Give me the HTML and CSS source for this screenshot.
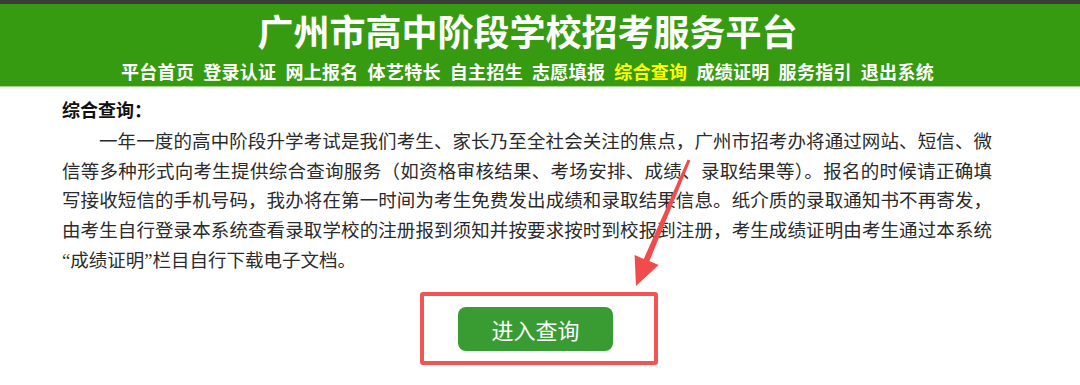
FILE: index.html
```html
<!DOCTYPE html>
<html lang="zh-CN">
<head>
<meta charset="utf-8">
<title>广州市高中阶段学校招考服务平台</title>
<link rel="stylesheet" href="styles.css">
</head>
<body>
<div class="topbar"></div>
<header class="header">
  <h1 class="title">广州市高中阶段学校招考服务平台</h1>
  <nav class="nav">
    <a>平台首页</a>
    <a>登录认证</a>
    <a>网上报名</a>
    <a>体艺特长</a>
    <a>自主招生</a>
    <a>志愿填报</a>
    <a class="active">综合查询</a>
    <a>成绩证明</a>
    <a>服务指引</a>
    <a>退出系统</a>
  </nav>
</header>
<main class="content">
  <h2 class="heading">综合查询：</h2>
  <p class="intro">一年一度的高中阶段升学考试是我们考生、家长乃至全社会关注的焦点，广州市招考办将通过网站、短信、微信等多种形式向考生提供综合查询服务（如资格审核结果、考场安排、成绩、录取结果等）。报名的时候请正确填写接收短信的手机号码，我办将在第一时间为考生免费发出成绩和录取结果信息。纸介质的录取通知书不再寄发，由考生自行登录本系统查看录取学校的注册报到须知并按要求按时到校报到注册，考生成绩证明由考生通过本系统<span class="q">“</span>成绩证明<span class="q">”</span>栏目自行下载电子文档。</p>
  <div class="actions">
    <div class="highlight">
      <a class="btn">进入查询</a>
    </div>
  </div>
</main>
<svg class="arrow" width="1080" height="385" viewBox="0 0 1080 385">
  <polygon points="687.6,159.4 690.4,160.6 649.4,261.1 658.6,265 636,286 634.6,255 643.8,258.9" fill="#f24b4b"/>
</svg>
</body>
</html>
```
FILE: styles.css
```css
html, body {
  margin: 0;
  padding: 0;
  background: #ffffff;
}
body {
  width: 1080px;
  height: 385px;
  overflow: hidden;
  position: relative;
  font-family: "Noto Sans CJK SC", sans-serif;
}
.topbar {
  height: 4px;
  background: #3b3d3b;
}
.header {
  background: #379b12;
  border-bottom: 1px solid #9fd68c;
  padding: 4px 25px 3px 0;
  display: flex;
  flex-direction: column;
  align-items: center;
}
.title {
  margin: 0;
  font-size: 36px;
  line-height: 44px;
  font-weight: 700;
  color: #ffffff;
  letter-spacing: 0;
}
.nav {
  margin-top: 7px;
  display: flex;
  gap: 9px;
  font-size: 18px;
  line-height: 24px;
  font-weight: 700;
  letter-spacing: 0.3px;
}
.nav a {
  color: #ffffff;
  text-decoration: none;
}
.nav a.active {
  color: #ffff00;
}
.content {
  margin-left: 62px;
  width: 930px;
}
.heading {
  margin: 10px 0 0;
  font-size: 18px;
  line-height: 24px;
  font-weight: 700;
  color: #111111;
}
.intro {
  margin: 7px 0 0;
  font-family: "Liberation Serif", "Noto Sans CJK SC", serif;
  font-size: 18.5px;
  line-height: 29.7px;
  text-indent: 2em;
  text-align: justify;
  color: #2b2b2b;
}
.intro .q {
  font-family: "Liberation Serif", serif;
}
.actions {
  margin-top: 15px;
  display: flex;
  justify-content: center;
  padding-left: 24px;
}
.highlight {
  border: 4px solid #f25454;
  border-radius: 3px;
  padding: 11px 41px 10px 34px;
}
.btn {
  display: flex;
  align-items: center;
  justify-content: center;
  width: 155px;
  height: 44px;
  border-radius: 8px;
  background: #389c32;
  color: #ffffff;
  font-size: 22px;
  text-decoration: none;
}
.arrow {
  position: absolute;
  left: 0;
  top: 0;
  pointer-events: none;
}
```
